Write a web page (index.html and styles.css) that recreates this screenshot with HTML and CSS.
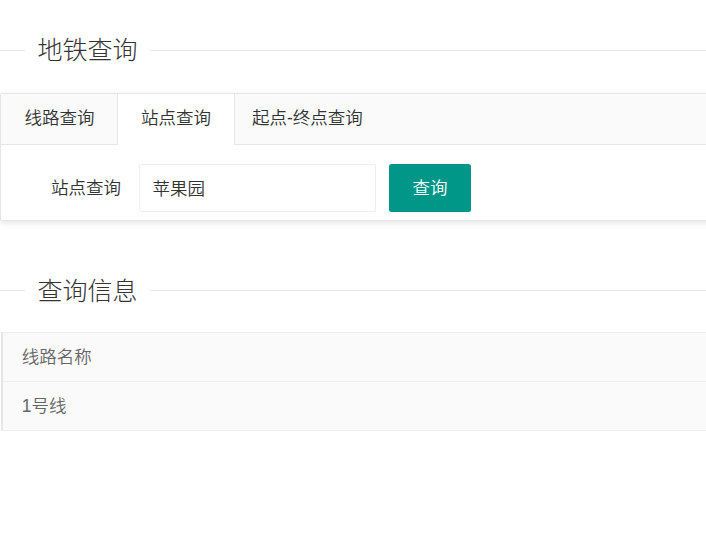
FILE: index.html
```html
<!DOCTYPE html>
<html lang="zh-CN">
<head>
<meta charset="utf-8">
<title>地铁查询</title>
<link rel="stylesheet" href="styles.css">
</head>
<body>
<div class="page">
  <div class="field-title first"><span class="legend">地铁查询</span></div>

  <div class="tab-card">
    <ul class="tab-title">
      <li class="tab">线路查询</li>
      <li class="tab active">站点查询</li>
      <li class="tab">起点-终点查询</li>
    </ul>
    <div class="tab-content">
      <form class="form-row" onsubmit="return false">
        <label class="form-label">站点查询</label>
        <input class="form-input" type="text" value="苹果园">
        <button class="btn" type="button">查询</button>
      </form>
    </div>
  </div>

  <div class="field-title second"><span class="legend">查询信息</span></div>

  <div class="table-view">
    <div class="table-row head"><div class="cell">线路名称</div></div>
    <div class="table-row"><div class="cell">1号线</div></div>
  </div>
</div>
</body>
</html>
```

FILE: styles.css
```css
html, body {
  margin: 0;
  padding: 0;
  overflow: hidden;
  background: #fff;
}

body {
  font-family: "Liberation Sans", "Noto Sans CJK SC", sans-serif;
  font-weight: 350;
  color: #333;
  font-size: 17.5px;
}

.page {
  width: 780px;
}

.field-title {
  display: flex;
  align-items: center;
  height: 38px;
}

.field-title::before {
  content: "";
  width: 25px;
  border-top: 1px solid #e6e6e6;
}

.field-title::after {
  content: "";
  flex: 1;
  border-top: 1px solid #e6e6e6;
}

.field-title.first {
  margin-top: 31px;
  margin-bottom: 24px;
}

.field-title.second {
  margin-top: 51px;
  margin-bottom: 22px;
}

.legend {
  padding: 0 12.5px;
  font-size: 25px;
  font-weight: 300;
  line-height: 38px;
  color: #333;
}

.tab-card {
  border: 1px solid #e6e6e6;
  border-radius: 2px;
  box-shadow: 0 2px 6px 0 rgba(0, 0, 0, 0.1);
  background: #fff;
}

.tab-title {
  display: flex;
  margin: 0;
  padding: 0;
  list-style: none;
  height: 50px;
  background: #fafafa;
  border-bottom: 1px solid #e6e6e6;
}

.tab {
  box-sizing: border-box;
  height: 51px;
  min-width: 118px;
  padding: 0 17px;
  margin-left: -1px;
  line-height: 49px;
  text-align: center;
  color: #333;
  white-space: nowrap;
  border-left: 1px solid transparent;
  border-right: 1px solid transparent;
}

.tab:first-child {
  margin-left: 0;
  min-width: 117px;
}

.tab.active {
  background: #fff;
  border-left-color: #e6e6e6;
  border-right-color: #e6e6e6;
}

.tab-content {
  padding: 19px 0 8px;
}

.form-row {
  display: flex;
  align-items: center;
  margin: 0;
}

.form-label {
  width: 120px;
  text-align: right;
  color: #333;
  margin-right: 18px;
  padding-bottom: 3px;
}

.form-input {
  box-sizing: border-box;
  width: 237px;
  height: 47.5px;
  padding: 0 12.5px;
  border: 1px solid #eee;
  border-radius: 2px;
  font: inherit;
  font-size: 17.5px;
  color: #333;
  outline: none;
  margin: 0 13px 0 0;
}

.btn {
  box-sizing: border-box;
  width: 82px;
  height: 47.5px;
  border: none;
  border-radius: 2.5px;
  background: #009688;
  color: #fff;
  font: inherit;
  font-size: 17.5px;
  padding: 0 0 2px;
}

.table-view {
  margin-left: 1px;
  border: 1px solid #eee;
  border-left: 2px solid #e6e6e6;
  background: #fafafa;
}

.table-row {
  height: 48px;
  display: flex;
  align-items: center;
}

.table-row + .table-row {
  border-top: 1px solid #eee;
}

.cell {
  padding: 0 18.75px 2px;
  color: #666;
}
```
